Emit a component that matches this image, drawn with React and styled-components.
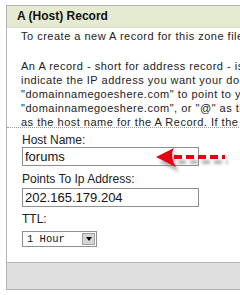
import React from "react";
import styled, { createGlobalStyle } from "styled-components";

const GlobalStyle = createGlobalStyle`
  html, body {
    margin: 0;
    padding: 0;
    background: #ffffff;
    overflow: hidden;
  }
  body {
    font-family: "Liberation Sans", Arial, sans-serif;
    color: #222;
  }
`;

const Page = styled.div`
  position: relative;
  width: 240px;
  height: 295px;
  overflow: hidden;
  padding: 5px 0 0 6px;
  box-sizing: border-box;
`;

const Panel = styled.div`
  width: 320px;
  border: 1px solid #b3b3b3;
  background: #fff;
`;

const Header = styled.div`
  height: 21px;
  line-height: 21px;
  padding-left: 10px;
  background: #e4ebd0;
  border-bottom: 1px solid #d6ddc2;
  font-weight: bold;
  font-size: 12px;
  color: #111;
`;

const Intro = styled.div`
  height: 98px;
  overflow: hidden;
  padding: 1px 14px 0;
  border-bottom: 1px dotted #9a9a9a;
  font-size: 11px;
  line-height: 14px;
  letter-spacing: 0.5px;
  color: #222;
`;

const Para = styled.p`
  margin: 0 0 16px;
  white-space: nowrap;
`;

const Form = styled.div`
  padding: 5px 15px 15px;
  display: flex;
  flex-direction: column;
  align-items: flex-start;
`;

const Label = styled.div`
  font-size: 12px;
  line-height: 14px;
  color: #222;
  margin-top: ${(p) => p.$mt || 0}px;
`;

const TextBox = styled.div`
  width: 177px;
  height: 19px;
  box-sizing: border-box;
  border: 1px solid #8f8f8f;
  margin-top: ${(p) => p.$mt || 0}px;
  padding-left: 2px;
  font-size: 13px;
  line-height: 17px;
  color: #111;
`;

const Select = styled.div`
  margin-top: 5px;
  width: 75px;
  height: 16px;
  box-sizing: border-box;
  border: 1px solid #8f8f8f;
  display: flex;
  align-items: center;
  justify-content: space-between;
  padding: 0 1px 0 4px;
`;

const SelectText = styled.span`
  font-family: "Liberation Mono", "Courier New", monospace;
  font-size: 10.5px;
  line-height: 14px;
  color: #111;
`;

const DropButton = styled.span`
  width: 13px;
  height: 12px;
  box-sizing: border-box;
  background: #d6d6d6;
  border: 1px solid #a0a0a0;
  display: flex;
  align-items: center;
  justify-content: center;
`;

const Triangle = styled.span`
  width: 0;
  height: 0;
  border-left: 3.5px solid transparent;
  border-right: 3.5px solid transparent;
  border-top: 4px solid #000;
`;

const Footer = styled.div`
  height: 26px;
  background: #dedede;
  border-top: 1px solid #b8b8b8;
`;

const Arrow = styled.svg`
  position: absolute;
  left: 150px;
  top: 143px;
  overflow: visible;
`;

function PointerArrow() {
  return (
    <Arrow width="85" height="34" viewBox="0 0 85 34">
      <defs>
        <filter id="blur" x="-20%" y="-50%" width="140%" height="200%">
          <feGaussianBlur stdDeviation="1.6" />
        </filter>
      </defs>
      <g transform="translate(3,5)" fill="#777" stroke="#777" opacity="0.55" filter="url(#blur)">
        <path d="M6 14 L24 5 Q19 13 26 24 Z" stroke="none" />
        <line x1="25" y1="14" x2="75" y2="14" strokeWidth="4" strokeDasharray="8 4" />
      </g>
      <path d="M6 14 L24 5 Q19 13 26 24 Z" fill="#e8000e" />
      <line x1="24" y1="14" x2="75" y2="14" stroke="#e8000e" strokeWidth="4" strokeDasharray="8 4" />
    </Arrow>
  );
}

export default function App() {
  return (
    <>
      <GlobalStyle />
      <Page>
        <Panel>
          <Header>A (Host) Record</Header>
          <Intro>
            <Para>To create a new A record for this zone file, fill in the fields below.</Para>
            <Para>
              An A record - short for address record - is used to
              <br />
              indicate the IP address you want your domain name
              <br />
              "domainnamegoeshere.com" to point to your server.
              <br />
              "domainnamegoeshere.com", or "@" as the host name
              <br />
              as the host name for the A Record. If the A record
            </Para>
          </Intro>
          <Form>
            <Label>Host Name:</Label>
            <TextBox>forums</TextBox>
            <Label $mt={6}>Points To Ip Address:</Label>
            <TextBox $mt={2}>202.165.179.204</TextBox>
            <Label $mt={5}>TTL:</Label>
            <Select>
              <SelectText>1 Hour</SelectText>
              <DropButton>
                <Triangle />
              </DropButton>
            </Select>
          </Form>
          <Footer />
        </Panel>
        <PointerArrow />
      </Page>
    </>
  );
}
